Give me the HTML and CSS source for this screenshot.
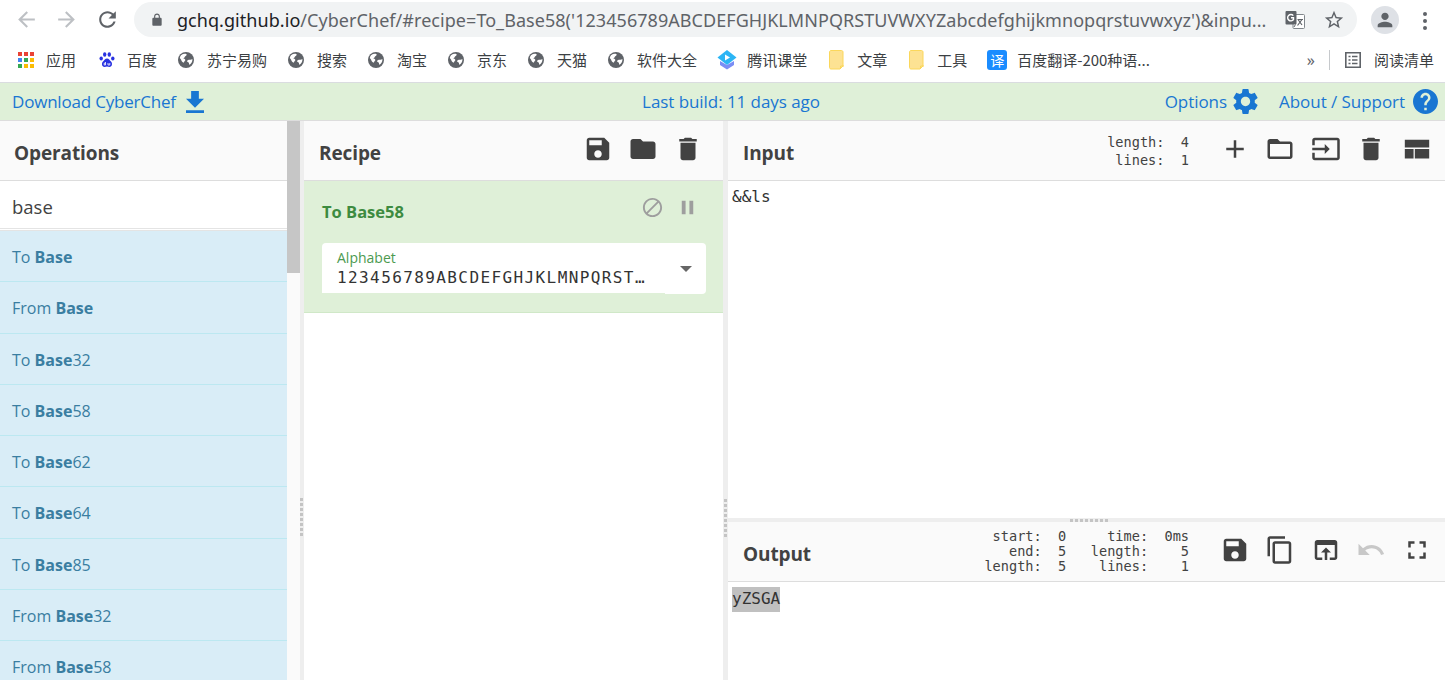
FILE: index.html
```html
<!DOCTYPE html>
<html lang="zh">
<head>
<meta charset="utf-8">
<title>CyberChef</title>
<link rel="stylesheet" href="styles.css">
</head>
<body>
<svg class="defs" aria-hidden="true">
  <symbol id="i-save" viewBox="0 0 24 24"><path d="M17 3H5c-1.11 0-2 .9-2 2v14c0 1.1.89 2 2 2h14c1.1 0 2-.9 2-2V7l-4-4zm-5 16c-1.66 0-3-1.34-3-3s1.34-3 3-3 3 1.34 3 3-1.34 3-3 3zm3-10H5V5h10v4z"/></symbol>
  <symbol id="i-folder" viewBox="0 0 24 24"><path d="M10 4H4c-1.1 0-1.99.9-1.99 2L2 18c0 1.1.9 2 2 2h16c1.1 0 2-.9 2-2V8c0-1.1-.9-2-2-2h-8l-2-2z"/></symbol>
  <symbol id="i-delete" viewBox="0 0 24 24"><path d="M6 19c0 1.1.9 2 2 2h8c1.1 0 2-.9 2-2V7H6v12zM19 4h-3.5l-1-1h-5l-1 1H5v2h14V4z"/></symbol>
  <symbol id="i-globe" viewBox="0 0 16 16"><circle cx="8" cy="8" r="8" fill="#5f6368"/><path fill="#fff" d="M3 3.2c2-1.4 4-1.7 5.6-1 .3 1-.6 1.9-1.6 2.2-.3 1.2-1.2 1.6-2 1.9.9.5 2 .6 2.4 1.6-.5 1.3-1.6 1.5-1.6 2.9-1.5-.5-2.4-1.8-2.8-3.3L1.8 6C2 5 2.4 4 3 3.2zM14.4 7c.2 2.2-.8 4.4-2.7 5.8-.7-.3-.8-1.2-.7-2-.7-.6-1.8-.9-2-1.9.7-.9 1.8-1.4 3-1.2.8.2 1.6-.1 2.4-.7z"/></symbol>
  <symbol id="i-note" viewBox="0 0 16 20"><path fill="#fde293" stroke="#fbd75b" d="M2 .5h10.5c.8 0 1.500.7 1.500 1.500v14l-3 3H2c-.8 0-1.500-.7-1.500-1.500V2C.5 1.200 1.200.5 2 .5z"/><path fill="none" stroke="#fbd75b" d="M11.500 19v-3H15"/></symbol>
  <symbol id="i-dl" viewBox="5 3 14 17"><path d="M19 9h-4V3H9v6H5l7 7 7-7zM5 18v2h14v-2H5z"/></symbol>
</svg>

<header class="chrome-bar">
  <svg class="nav-icon muted" viewBox="0 0 24 24"><path d="M20 11H7.830l5.590-5.590L12 4l-8 8 8 8 1.410-1.410L7.830 13H20v-2z"/></svg>
  <svg class="nav-icon muted second-nav" viewBox="0 0 24 24"><path d="M12 4l-1.410 1.410L16.170 11H4v2h12.170l-5.580 5.590L12 20l8-8z"/></svg>
  <svg class="nav-icon reload" viewBox="0 0 24 24"><path d="M17.650 6.350C16.200 4.900 14.210 4 12 4c-4.420 0-7.990 3.580-7.990 8s3.570 8 7.990 8c3.730 0 6.840-2.550 7.730-6h-2.080c-.82 2.330-3.040 4-5.650 4-3.310 0-6-2.690-6-6s2.690-6 6-6c1.660 0 3.140.69 4.220 1.780L13 11h7V4l-2.350 2.350z"/></svg>
  <div class="omnibox">
    <svg class="lock" viewBox="0 0 24 24"><path d="M18 8h-1V6c0-2.760-2.240-5-5-5S7 3.240 7 6v2H6c-1.100 0-2 .9-2 2v10c0 1.100.9 2 2 2h12c1.100 0 2-.9 2-2V10c0-1.100-.9-2-2-2zM9 6c0-1.660 1.340-3 3-3s3 1.340 3 3v2H9V6z"/></svg>
    <div class="url"><span class="host">gchq.github.io</span>/CyberChef/#recipe=To_Base58('123456789ABCDEFGHJKLMNPQRSTUVWXYZabcdefghijkmnopqrstuvwxyz')&amp;inpu...</div>
    <svg class="translate" viewBox="0 0 20 20"><rect x="8" y="4.500" width="11.500" height="14" rx="1" fill="#fff" stroke="#80868b"/><rect x=".5" y="1" width="11" height="13.500" rx="1" fill="#5f6368"/><path d="M10.500 14.500l-1.500 2.500" stroke="#5f6368" fill="none"/><path d="M8.300 5.600A3.200 3.200 0 1 0 8.500 9.500V7.800H6" fill="none" stroke="#fff" stroke-width="1.400"/><path d="M13 9.500l4 5.500M17 9.500l-4.500 6M12.500 9.500h5.500" fill="none" stroke="#5f6368" stroke-width="1.200"/></svg>
    <svg class="star" viewBox="0 0 24 24"><path d="M22 9.240l-7.190-.62L12 2 9.190 8.630 2 9.240l5.460 4.730L5.820 21 12 17.270 18.180 21l-1.630-7.030L22 9.240zM12 15.400l-3.760 2.270 1-4.280-3.320-2.880 4.380-.38L12 6.100l1.710 4.040 4.380.38-3.320 2.880 1 4.280L12 15.400z"/></svg>
  </div>
  <div class="avatar"><svg viewBox="0 0 24 24"><path d="M12 12c2.210 0 4-1.790 4-4s-1.790-4-4-4-4 1.790-4 4 1.790 4 4 4zm0 2c-2.670 0-8 1.340-8 4v2h16v-2c0-2.660-5.330-4-8-4z"/></svg></div>
  <div class="kebab"><i></i><i></i><i></i></div>
</header>

<nav class="bookmarks">
  <a class="bm first">
    <svg class="bm-icon" viewBox="0 0 16 16"><rect width="4" height="4" fill="#ea4335"/><rect x="6" width="4" height="4" fill="#ea4335"/><rect x="12" width="4" height="4" fill="#ea4335"/><rect y="6" width="4" height="4" fill="#4285f4"/><rect x="6" y="6" width="4" height="4" fill="#34a853"/><rect x="12" y="6" width="4" height="4" fill="#fbbc04"/><rect y="12" width="4" height="4" fill="#34a853"/><rect x="6" y="12" width="4" height="4" fill="#fbbc04"/><rect x="12" y="12" width="4" height="4" fill="#fbbc04"/></svg>
    <span>应用</span></a>
  <a class="bm">
    <svg class="bm-icon" viewBox="0 0 16 16"><g fill="#2932e1"><ellipse cx="2.200" cy="6.500" rx="1.700" ry="2.100"/><ellipse cx="5.700" cy="2.500" rx="1.700" ry="2.300"/><ellipse cx="10.300" cy="2.500" rx="1.700" ry="2.300"/><ellipse cx="13.800" cy="6.500" rx="1.700" ry="2.100"/><path d="M8 6.500c2 0 2.500 1.800 4 3 1.800 1.500 1.200 5.500-1.500 5.500-1 0-1.500-.4-2.500-.4s-1.500.4-2.500.4C2.800 15 2.200 11 4 9.500c1.500-1.200 2-3 4-3z"/></g><path d="M6.500 10v3H5.200v-1.800h1.300M9 11v2h1.800v-2" fill="none" stroke="#fff" stroke-width=".8"/></svg>
    <span>百度</span></a>
  <a class="bm"><svg class="bm-icon globe"><use href="#i-globe"/></svg><span>苏宁易购</span></a>
  <a class="bm"><svg class="bm-icon globe"><use href="#i-globe"/></svg><span>搜索</span></a>
  <a class="bm"><svg class="bm-icon globe"><use href="#i-globe"/></svg><span>淘宝</span></a>
  <a class="bm"><svg class="bm-icon globe"><use href="#i-globe"/></svg><span>京东</span></a>
  <a class="bm"><svg class="bm-icon globe"><use href="#i-globe"/></svg><span>天猫</span></a>
  <a class="bm"><svg class="bm-icon globe"><use href="#i-globe"/></svg><span>软件大全</span></a>
  <a class="bm">
    <svg class="bm-icon wide" viewBox="0 0 20 20"><path fill="#7b8ef5" d="M3 11l7 4 7-4v4l-7 4.500L3 15z"/><path fill="#2bb5f5" d="M10 0l9.500 7.500L10 15 .5 7.500z"/><path fill="#fff" d="M8 4.500l5 3-5 3z"/></svg>
    <span>腾讯课堂</span></a>
  <a class="bm"><svg class="bm-icon note"><use href="#i-note"/></svg><span>文章</span></a>
  <a class="bm"><svg class="bm-icon note"><use href="#i-note"/></svg><span>工具</span></a>
  <a class="bm"><span class="yi">译</span><span>百度翻译-200种语...</span></a>
  <span class="more">»</span>
  <span class="bm-sep"></span>
  <a class="bm reading">
    <svg class="reading-icon" viewBox="0 0 18 18"><path fill="none" stroke="#5f6368" stroke-width="1.600" d="M1.800 1.800h14.400v14.400H1.800z"/><path fill="none" stroke="#5f6368" stroke-width="1.500" d="M4.500 5.500h2M8 5.500h5.500M4.500 9h2M8 9h5.500M4.500 12.500h2M8 12.500h5.500"/></svg>
    <span>阅读清单</span></a>
</nav>

<div class="banner">
  <div class="banner-left">Download CyberChef <svg class="bi"><use href="#i-dl"/></svg></div>
  <div class="banner-mid">Last build: 11 days ago</div>
  <div class="banner-right">
    <span>Options</span>
    <svg class="bi-gear" viewBox="0 0 24 24"><path d="M19.140 12.940c.04-.3.06-.61.06-.94 0-.32-.02-.64-.07-.94l2.030-1.580c.18-.14.23-.41.12-.61l-1.920-3.320c-.12-.22-.37-.29-.59-.22l-2.390.96c-.5-.38-1.030-.7-1.620-.94l-.36-2.540c-.04-.24-.24-.41-.48-.41h-3.840c-.24 0-.43.17-.47.41l-.36 2.540c-.59.24-1.130.57-1.620.94l-2.390-.96c-.22-.08-.47 0-.59.22L2.740 8.870c-.12.21-.08.47.12.61l2.030 1.580c-.05.3-.09.63-.09.94s.02.64.07.94l-2.030 1.580c-.18.14-.23.41-.12.61l1.920 3.320c.12.22.37.29.59.22l2.390-.96c.5.38 1.030.7 1.620.94l.36 2.540c.05.24.24.41.48.41h3.840c.24 0 .44-.17.47-.41l.36-2.540c.59-.24 1.130-.56 1.620-.94l2.390.96c.22.08.47 0 .59-.22l1.920-3.320c.12-.22.07-.47-.12-.61l-2.010-1.580zM12 15.600c-1.980 0-3.600-1.620-3.600-3.600s1.620-3.600 3.600-3.600 3.600 1.620 3.600 3.600-1.620 3.600-3.600 3.600z"/></svg>
    <span class="about">About / Support</span>
    <svg class="bi-help" viewBox="2 2 20 20"><path d="M12 2C6.480 2 2 6.480 2 12s4.480 10 10 10 10-4.480 10-10S17.520 2 12 2zm1 17h-2v-2h2v2zm2.070-7.750l-.9.92C13.450 12.900 13 13.500 13 15h-2v-.5c0-1.100.45-2.100 1.170-2.830l1.240-1.260c.37-.36.59-.86.59-1.410 0-1.100-.9-2-2-2s-2 .9-2 2H8c0-2.210 1.790-4 4-4s4 1.790 4 4c0 .88-.36 1.680-.93 2.250z"/></svg>
  </div>
</div>

<main class="workspace">
  <section class="ops">
    <div class="ops-main">
      <div class="head"><h2>Operations</h2></div>
      <div class="search">base</div>
      <ul class="op-list">
        <li>To <b>Base</b></li>
        <li>From <b>Base</b></li>
        <li>To <b>Base</b>32</li>
        <li>To <b>Base</b>58</li>
        <li>To <b>Base</b>62</li>
        <li>To <b>Base</b>64</li>
        <li>To <b>Base</b>85</li>
        <li>From <b>Base</b>32</li>
        <li>From <b>Base</b>58</li>
      </ul>
    </div>
    <div class="scrollbar"><div class="thumb"></div></div>
  </section>

  <div class="gutter-v"><div class="grip-v"></div></div>

  <section class="recipe">
    <div class="head">
      <h2>Recipe</h2>
      <div class="tools recipe-tools">
        <svg class="tool"><use href="#i-save"/></svg>
        <svg class="tool"><use href="#i-folder"/></svg>
        <svg class="tool"><use href="#i-delete"/></svg>
      </div>
    </div>
    <div class="op-card">
      <div class="op-top">
        <span class="op-title">To Base58</span>
        <div class="op-ctrl">
          <svg class="ctl" viewBox="0 0 24 24"><path d="M12 2C6.480 2 2 6.480 2 12s4.480 10 10 10 10-4.480 10-10S17.520 2 12 2zM4 12c0-4.420 3.580-8 8-8 1.850 0 3.550.63 4.900 1.690L5.690 16.900C4.630 15.550 4 13.850 4 12zm8 8c-1.850 0-3.550-.63-4.900-1.690L18.310 7.100C19.370 8.450 20 10.150 20 12c0 4.420-3.580 8-8 8z"/></svg>
          <svg class="ctl" viewBox="0 0 24 24"><path d="M6 19h4V5H6v14zm8-14v14h4V5h-4z"/></svg>
        </div>
      </div>
      <div class="field">
        <div class="field-main">
          <label>Alphabet</label>
          <div class="field-val">123456789ABCDEFGHJKLMNPQRST…</div>
        </div>
        <div class="field-arrow"><i></i></div>
      </div>
    </div>
  </section>

  <div class="gutter-v second"><div class="grip-v"></div></div>

  <section class="io">
    <div class="io-input">
      <div class="head">
        <h2>Input</h2>
        <div class="stats input-stats"><pre>length:  4</pre><pre> lines:  1</pre></div>
        <div class="tools io-tools">
          <svg class="tool" viewBox="0 0 24 24"><path d="M19 13h-6v6h-2v-6H5v-2h6V5h2v6h6v2z"/></svg>
          <svg class="tool" viewBox="0 0 24 24"><path d="M20 6h-8l-2-2H4c-1.100 0-1.990.9-1.990 2L2 18c0 1.100.9 2 2 2h16c1.100 0 2-.9 2-2V8c0-1.100-.9-2-2-2zm0 12H4V8h16v10z"/></svg>
          <svg class="tool" viewBox="0 0 24 24"><path d="M21 3.010H3c-1.100 0-2 .9-2 2V9h2V4.990h18v14.030H3V15H1v4.010c0 1.100.9 1.980 2 1.980h18c1.100 0 2-.88 2-1.980v-14c0-1.110-.9-2-2-2zM11 16l4-4-4-4v3H1v2h10v3z"/></svg>
          <svg class="tool"><use href="#i-delete"/></svg>
          <svg class="tool" viewBox="0 0 24 24"><path d="M2.250 4.500h19.500v6.200H2.250zM2.250 11.900h7v7.600h-7zM10.250 11.900h11.500v7.600h-11.500z"/></svg>
        </div>
      </div>
      <div class="text-area input-text">&amp;&amp;ls</div>
    </div>
    <div class="gutter-h"><div class="grip-h"></div></div>
    <div class="io-output">
      <div class="head">
        <h2>Output</h2>
        <div class="stats output-stats"><pre> start:  0     time:  0ms</pre><pre>   end:  5   length:    5</pre><pre>length:  5    lines:    1</pre></div>
        <div class="tools io-tools">
          <svg class="tool"><use href="#i-save"/></svg>
          <svg class="tool" viewBox="0 0 24 24"><path d="M16 1H4c-1.100 0-2 .9-2 2v14h2V3h12V1zm3 4H8c-1.100 0-2 .9-2 2v14c0 1.100.9 2 2 2h11c1.100 0 2-.9 2-2V7c0-1.100-.9-2-2-2zm0 16H8V7h11v14z"/></svg>
          <svg class="tool" viewBox="0 0 24 24"><path d="M19 4H5c-1.110 0-2 .9-2 2v12c0 1.100.89 2 2 2h4v-2H5V8h14v10h-4v2h4c1.100 0 2-.89 2-2V6c0-1.100-.89-2-2-2zm-7 6l-4 4h3v6h2v-6h3l-4-4z"/></svg>
          <svg class="tool off" viewBox="0 0 24 24"><path d="M12.500 8c-2.650 0-5.050.99-6.900 2.600L2 7v9h9l-3.620-3.620c1.390-1.160 3.160-1.880 5.120-1.880 3.540 0 6.550 2.310 7.600 5.500l2.370-.78C21.080 11.030 17.150 8 12.500 8z"/></svg>
          <svg class="tool" viewBox="0 0 24 24"><path d="M7 14H5v5h5v-2H7v-3zm-2-4h2V7h3V5H5v5zm12 7h-3v2h5v-5h-2v3zM14 5v2h3v3h2V5h-5z"/></svg>
        </div>
      </div>
      <div class="text-area"><span class="sel">yZSGA</span></div>
    </div>
  </section>
</main>
</body>
</html>
```

FILE: styles.css
```css
* { box-sizing: border-box; }
html, body { margin: 0; padding: 0; height: 680px; overflow: hidden; background: #fff; }
body { font-family: "Open Sans", "Noto Sans CJK SC", sans-serif; color: #424242; display: flex; flex-direction: column; }
.defs { position: absolute; width: 0; height: 0; }
pre { margin: 0; font: inherit; }

/* browser toolbar */
.chrome-bar { height: 37px; flex: none; display: flex; align-items: flex-start; padding: 2px 0 0 13.500px; }
.nav-icon { width: 25px; height: 25px; fill: #5f6368; margin: 4.500px 15px 0 0; flex: none; }
.nav-icon.muted { fill: #bdc0c4; }
.nav-icon.second-nav { margin-right: 16px; }
.nav-icon.reload { margin-right: 14.500px; }
.omnibox { width: 1223px; height: 35px; background: #f1f3f4; border-radius: 18px; display: flex; align-items: center; padding: 0 14px 0 16px; flex: none; }
.lock { width: 14px; height: 16px; fill: #5f6368; flex: none; }
.url { width: 1094px; margin-left: 13px; font-family: "Noto Sans", sans-serif; font-size: 18px; letter-spacing: .05px; color: #5f6368; white-space: nowrap; flex: none; }
.host { color: #202124; }
.translate { width: 20px; height: 20px; margin-left: 14px; flex: none; }
.star { width: 22px; height: 22px; fill: #5f6368; margin-left: 18px; flex: none; }
.avatar { width: 28px; height: 28px; border-radius: 50%; background: #dee1e6; margin: 4px 0 0 14px; display: flex; align-items: center; justify-content: center; flex: none; }
.avatar svg { width: 22px; height: 22px; fill: #5f6368; }
.kebab { margin: 10px 0 0 24px; display: flex; flex-direction: column; gap: 3px; flex: none; }
.kebab i { width: 4px; height: 4px; border-radius: 50%; background: #5f6368; display: block; }

/* bookmarks */
.bookmarks { height: 46px; flex: none; border-bottom: 1px solid #dadce0; display: flex; align-items: center; padding: 0 11px 0 18px; font-size: 15px; color: #3c4043; font-family: "Noto Sans CJK SC", "Noto Sans", sans-serif; }
.bm { display: flex; align-items: center; margin-right: 21px; white-space: nowrap; }
.bm.first { margin-right: 23px; }
.bm-icon { width: 16px; height: 16px; margin-right: 12px; flex: none; }
.bm-icon.globe { margin-right: 13px; }
.bm-icon.wide { width: 20px; height: 20px; margin-right: 10px; margin-left: -1px; }
.bm-icon.note { width: 16px; height: 20px; margin: 0 12px 0 1px; }
.yi { width: 20px; height: 20px; border-radius: 3px; background: #1a8cff; color: #fff; font-size: 14px; display: flex; align-items: center; justify-content: center; margin: 0 10px 0 -1px; }
.more { margin-left: auto; font-size: 16px; color: #5f6368; font-family: "Noto Sans", sans-serif; }
.bm-sep { width: 1px; height: 20px; background: #c6c9cc; margin: 0 14px 0 14px; }
.bm.reading { margin-right: 0; }
.reading-icon { width: 18px; height: 18px; margin-right: 12px; flex: none; }

/* banner */
.banner { height: 38px; flex: none; background: #dff0d8; border-bottom: 1px solid #ddd; display: grid; grid-template-columns: 1fr 1fr 1fr; align-items: center; padding: 0 7px 0 12px; font-size: 17px; color: #1976d2; white-space: nowrap; letter-spacing: -.2px; }
.banner-left { display: flex; align-items: center; gap: 10px; }
.banner-mid { text-align: center; margin-left: 12px; letter-spacing: -.06px; }
.banner-right { display: flex; align-items: center; justify-content: flex-end; letter-spacing: -.05px; }
.bi { width: 18px; height: 22px; fill: #1976d2; }
.bi-gear { width: 31px; height: 31px; fill: #1976d2; margin-left: 3px; }
.about { margin-left: 18px; }
.bi-help { width: 25px; height: 25px; fill: #1976d2; margin-left: 8px; }

/* workspace */
.workspace { flex: 1; min-height: 0; display: flex; overflow: hidden; }
.head { height: 60px; flex: none; background: #fafafa; border-bottom: 1px solid #ddd; display: flex; align-items: center; padding-top: 4px; }
.head h2 { margin: 0; font-size: 19px; font-weight: 700; color: #424242; letter-spacing: -.1px; }
.tools { display: flex; align-items: center; }
.tool { width: 30px; height: 30px; fill: #424242; flex: none; }
.tool.off { fill: #c8c8c8; }

/* operations */
.ops { width: 300px; flex: none; display: flex; }
.ops-main { width: 287px; flex: none; display: flex; flex-direction: column; }
.ops .head { padding-left: 14px; }
.search { height: 50px; flex: none; padding: 11px 12px 0; font-size: 18.500px; background: #fff; border-bottom: 3px double #e4e4e4; line-height: 30px; }
.op-list { list-style: none; margin: 0; padding: 0; background: #d9edf7; flex: 1; overflow: hidden; }
.op-list li { height: 51.250px; padding: 0 12px; line-height: 52px; border-bottom: 1px solid #bce8f1; color: #3a7ea1; font-size: 16px; white-space: nowrap; }
.op-list b { font-weight: 700; }
.scrollbar { width: 13px; background: #fafafa; flex: none; }
.thumb { height: 152px; background: #c6c6c6; }

/* gutters */
.gutter-v { width: 4px; flex: none; background: #eee; padding-top: 377px; }
.gutter-v.second { width: 5px; padding-top: 378px; padding-left: 1px; }
.grip-v { width: 3px; height: 40px; background: repeating-linear-gradient(to bottom, #c4c4c4 0 3px, transparent 3px 5px); }
.gutter-h { height: 4px; flex: none; background: #eee; display: flex; justify-content: center; padding: 1px 0 0; }
.grip-h { width: 40px; height: 3px; background: repeating-linear-gradient(to right, #c4c4c4 0 3px, transparent 3px 5px); margin-left: 6px; }

/* recipe */
.recipe { width: 419px; flex: none; display: flex; flex-direction: column; }
.recipe .head { padding-left: 15px; padding-right: 20px; justify-content: space-between; }
.recipe-tools { gap: 15px; margin-top: -7px; }
.op-card { height: 132px; flex: none; background: #dff0d8; border-bottom: 1px solid #d0e8c8; padding: 0 17px 0 18px; }
.op-top { height: 62px; display: flex; justify-content: space-between; align-items: flex-start; padding-top: 19px; }
.op-title { font-size: 16.500px; font-weight: 700; color: #3d8b40; line-height: 24px; }
.op-ctrl { display: flex; gap: 12px; margin-top: -4.500px; padding-right: 7.500px; }
.ctl { width: 23px; height: 23px; fill: #9e9e9e; }
.field { display: flex; align-items: flex-start; height: 51px; }
.field-main { flex: 1; min-width: 0; height: 50px; background: #fff; border-radius: 4px 0 0 0; padding: 7px 15px 0; }
.field-main label { display: block; font-size: 14px; line-height: 15px; color: #4c9a50; }
.field-val { margin-top: 4px; font-family: "DejaVu Sans Mono", monospace; font-size: 16px; letter-spacing: 1.400px; line-height: 18px; color: #333; white-space: nowrap; }
.field-arrow { width: 41px; height: 51px; background: #fff; border-radius: 0 4px 4px 0; display: flex; justify-content: center; padding: 23px 0 0 0; }
.field-arrow i { width: 0; height: 0; border: 6px solid transparent; border-top: 6px solid #666; border-bottom: 0; }

/* input / output */
.io { flex: 1; min-width: 0; display: flex; flex-direction: column; }
.io-input { height: 397px; flex: none; display: flex; flex-direction: column; }
.io-output { flex: 1; display: flex; flex-direction: column; }
.io .head { padding-left: 15px; padding-right: 15px; }
.stats { margin-left: auto; font-family: "DejaVu Sans Mono", monospace; font-size: 13.600px; color: #424242; }
.input-stats { line-height: 18px; margin-top: -4px; }
.output-stats { line-height: 15px; margin-top: -5px; }
.io-tools { gap: 15.500px; margin: -7px -1.500px 0 30.500px; }
.text-area { padding: 5px 4px; font-family: "DejaVu Sans Mono", monospace; font-size: 16px; line-height: 20px; color: #333; white-space: pre; }
.text-area.input-text { padding-top: 6px; }
.sel { background: #c0c0c0; display: inline-block; height: 25px; line-height: 24px; }
```
